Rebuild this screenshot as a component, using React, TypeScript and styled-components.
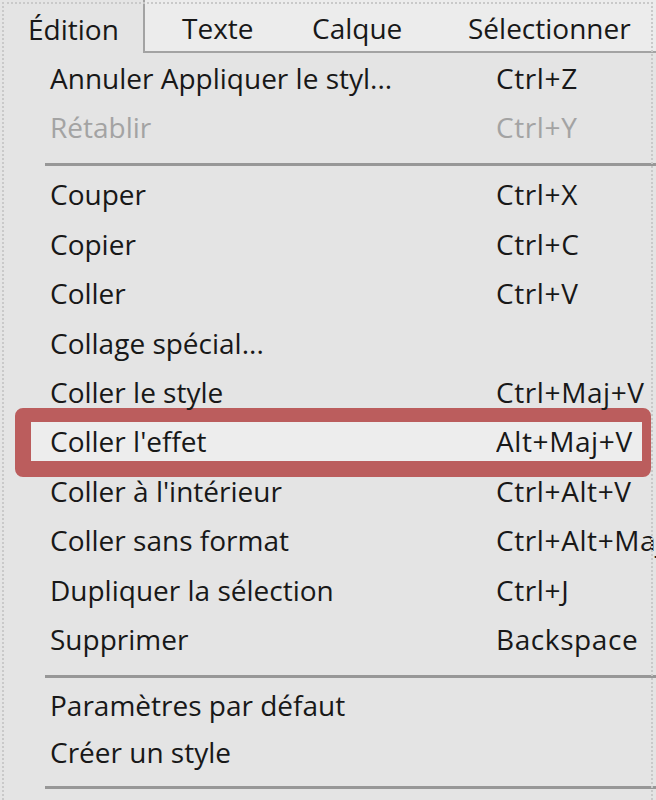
import React from "react";
import styled, { createGlobalStyle, css } from "styled-components";

const GlobalStyle = createGlobalStyle`
  html, body {
    margin: 0;
    padding: 0;
    background: #e4e4e4;
  }
`;

const Frame = styled.div`
  position: relative;
  z-index: 0;
  width: 656px;
  height: 800px;
  overflow: hidden;
  background-color: #e4e4e4;
  font-family: "Open Sans", "Noto Sans", sans-serif;
  font-size: 28px;
  color: #181818;

  &::after {
    content: "";
    position: absolute;
    top: 2px;
    left: 2px;
    right: 3px;
    bottom: -4px;
    border: 2px dotted #c9c9c9;
    pointer-events: none;
  }
`;

const MenuBar = styled.div`
  display: flex;
  height: 53px;
`;

const ActiveTab = styled.div`
  flex-shrink: 0;
  width: 143px;
  padding: 4px 0 0 28px;
  box-sizing: border-box;
  display: flex;
  align-items: center;
`;

const TabStrip = styled.div`
  flex: 1;
  display: flex;
  align-items: center;
  padding: 4px 0 0 37px;
  background-color: #ececec;
  border-left: 2px solid #a3a3a3;
  border-bottom: 2px solid #a3a3a3;
  overflow: hidden;
`;

const Tab = styled.div<{ $width?: number }>`
  width: ${(p) => (p.$width ? `${p.$width}px` : "auto")};
  flex-shrink: 0;
  white-space: nowrap;
`;

const MenuList = styled.div`
  display: flex;
  flex-direction: column;
`;

const Row = styled.div<{ $disabled?: boolean; $highlighted?: boolean; $height?: number }>`
  position: relative;
  display: grid;
  grid-template-columns: 446px 1fr;
  align-items: center;
  height: ${(p) => p.$height ?? 49.4}px;
  padding-left: 50px;
  white-space: nowrap;
  color: ${(p) => (p.$disabled ? "#a3a3a3" : "#181818")};

  ${(p) =>
    p.$highlighted &&
    css`
      &::before {
        content: "";
        position: absolute;
        z-index: -1;
        top: -9px;
        bottom: -11px;
        left: 15px;
        right: 5px;
        background-color: #ededed;
        border-style: solid;
        border-color: #bb5d5d;
        border-width: 14px 9px 16px 16px;
        border-radius: 8px;
      }
    `}
`;

const Shortcut = styled.span`
  overflow: hidden;
  letter-spacing: 0.6px;
`;

const Separator = styled.div`
  height: 18px;
  padding: 11px 0 0 45px;
  box-sizing: border-box;

  &::before {
    content: "";
    display: block;
    height: 3px;
    background-color: #979797;
  }
`;

type Item =
  | { sep: true }
  | { label: string; shortcut?: string; disabled?: boolean; highlighted?: boolean; height?: number };

const items: Item[] = [
  { label: "Annuler Appliquer le styl...", shortcut: "Ctrl+Z" },
  { label: "Rétablir", shortcut: "Ctrl+Y", disabled: true },
  { sep: true },
  { label: "Couper", shortcut: "Ctrl+X" },
  { label: "Copier", shortcut: "Ctrl+C" },
  { label: "Coller", shortcut: "Ctrl+V" },
  { label: "Collage spécial..." },
  { label: "Coller le style", shortcut: "Ctrl+Maj+V" },
  { label: "Coller l'effet", shortcut: "Alt+Maj+V", highlighted: true },
  { label: "Coller à l'intérieur", shortcut: "Ctrl+Alt+V" },
  { label: "Coller sans format", shortcut: "Ctrl+Alt+Maj+V" },
  { label: "Dupliquer la sélection", shortcut: "Ctrl+J" },
  { label: "Supprimer", shortcut: "Backspace" },
  { sep: true },
  { label: "Paramètres par défaut", height: 46.8 },
  { label: "Créer un style", height: 46.8 },
  { sep: true },
];

const App: React.FC = () => {
  return (
    <>
      <GlobalStyle />
      <Frame>
        <MenuBar>
          <ActiveTab>Édition</ActiveTab>
          <TabStrip>
            <Tab $width={130}>Texte</Tab>
            <Tab $width={156}>Calque</Tab>
            <Tab>Sélectionner</Tab>
          </TabStrip>
        </MenuBar>
        <MenuList>
          {items.map((item, i) =>
            "sep" in item ? (
              <Separator key={i} />
            ) : (
              <Row
                key={i}
                $disabled={item.disabled}
                $highlighted={item.highlighted}
                $height={item.height}
              >
                <span>{item.label}</span>
                <Shortcut>{item.shortcut}</Shortcut>
              </Row>
            )
          )}
        </MenuList>
      </Frame>
    </>
  );
};

export default App;
